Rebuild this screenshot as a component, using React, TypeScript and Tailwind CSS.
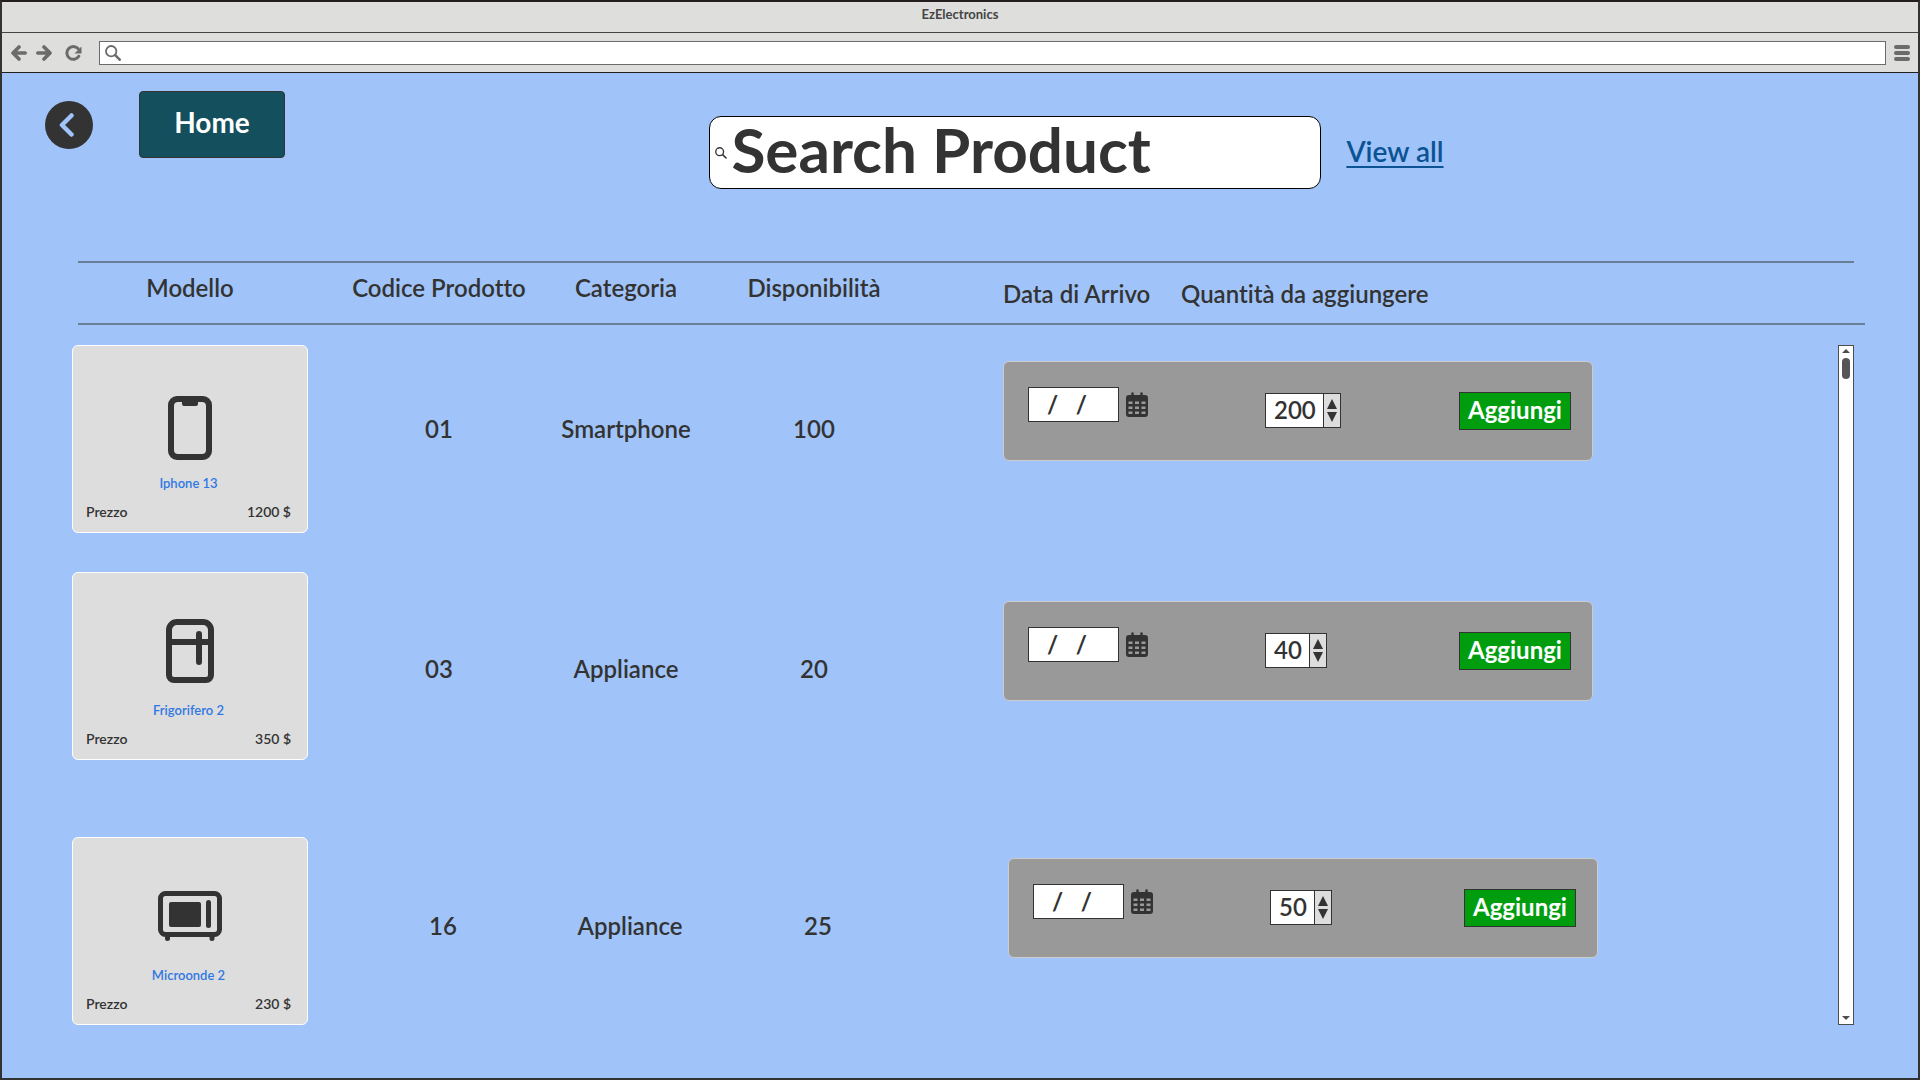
import type { ReactNode } from "react";

type Product = {
  name: string;
  price: string;
  code: string;
  category: string;
  available: string;
  quantity: string;
  icon: ReactNode;
  artClass: string;
  rowClass: string;
  cellClass: string;
  panelClass: string;
  quantityClass: string;
};

const PhoneIcon = () => (
  <svg width="44" height="64" viewBox="0 0 44 64" aria-hidden="true">
    <path
      fill="#333"
      fillRule="evenodd"
      d="M9 0h26a9 9 0 0 1 9 9v46a9 9 0 0 1-9 9H9a9 9 0 0 1-9-9V9a9 9 0 0 1 9-9zM14 6H10a4 4 0 0 0-4 4v44a4 4 0 0 0 4 4h24a4 4 0 0 0 4-4V10a4 4 0 0 0-4-4h-4v2a2 2 0 0 1-2 2H16a2 2 0 0 1-2-2z"
    />
  </svg>
);

const FridgeIcon = () => (
  <svg width="48" height="64" viewBox="0 0 48 64" fill="none" stroke="#333" strokeWidth="6" aria-hidden="true">
    <path d="M11 3h26a8 8 0 0 1 8 8v45a5 5 0 0 1-5 5H8a5 5 0 0 1-5-5V11a8 8 0 0 1 8-8zM3 23h42" />
    <path d="M33 15v28" strokeLinecap="round" />
  </svg>
);

const MicrowaveIcon = () => (
  <svg width="64" height="64" viewBox="0 0 64 64" aria-hidden="true">
    <rect x="2.5" y="9.5" width="59" height="41" rx="5" fill="none" stroke="#333" strokeWidth="5" />
    <rect x="11" y="18" width="32" height="25" rx="2" fill="#333" />
    <path d="M50.5 18.500v23" stroke="#333" strokeWidth="5" strokeLinecap="round" />
    <path d="M9.500 52v2.500M54 52v2.500" stroke="#333" strokeWidth="5" strokeLinecap="round" />
  </svg>
);

const CalendarIcon = () => (
  <svg width="22" height="25" viewBox="0 0 22 25" aria-hidden="true">
    <rect x="0" y="3" width="22" height="22" rx="3" fill="#333" />
    <path d="M6.500 1.500v4M15.500 1.500v4" stroke="#333" strokeWidth="2.500" strokeLinecap="round" />
    <path
      d="M2.500 9.500h4v2.500h-4zM9 9.500h4v2.500h-4zM15.500 9.500h4v2.500h-4zM2.500 14.500h4v2.500h-4zM9 14.500h4v2.500h-4zM15.500 14.500h4v2.500h-4zM2.500 19.500h4v2.500h-4zM9 19.500h4v2.500h-4zM15.500 19.500h4v2.500h-4z"
      fill="#999"
    />
  </svg>
);

const SearchGlyph = ({ size, color, stroke }: { size: number; color: string; stroke: number }) => (
  <svg width={size} height={size} viewBox="0 0 16 16" fill="none" stroke={color} strokeLinecap="round" aria-hidden="true">
    <circle cx="6.200" cy="6.200" r="5.200" strokeWidth="1.800" />
    <path d="M10.200 10.200l4.500 4.500" strokeWidth={stroke} />
  </svg>
);

const products: Product[] = [
  {
    name: "Iphone 13",
    price: "1200 $",
    code: "01",
    category: "Smartphone",
    available: "100",
    quantity: "200",
    icon: <PhoneIcon />,
    artClass: "pt-[50px]",
    rowClass: "h-[227px]",
    cellClass: "pt-[68px]",
    panelClass: "pt-4 pl-[91px]",
    quantityClass: "w-[57px]",
  },
  {
    name: "Frigorifero 2",
    price: "350 $",
    code: "03",
    category: "Appliance",
    available: "20",
    quantity: "40",
    icon: <FridgeIcon />,
    artClass: "pt-[46px]",
    rowClass: "h-[265px]",
    cellClass: "pt-[81px]",
    panelClass: "pt-[29px] pl-[91px]",
    quantityClass: "w-[43px]",
  },
  {
    name: "Microonde 2",
    price: "230 $",
    code: "16",
    category: "Appliance",
    available: "25",
    quantity: "50",
    icon: <MicrowaveIcon />,
    artClass: "pt-[46px]",
    rowClass: "h-[188px]",
    cellClass: "pt-[73px] pl-2",
    panelClass: "pt-[21px] pl-24",
    quantityClass: "w-[43px]",
  },
];

function BrowserBar() {
  return (
    <header className="bg-[#dededc]">
      <div className="h-[31px] border-b border-[#444] text-center text-[13px] leading-[25px] font-bold text-[#444]">
        EzElectronics
      </div>
      <div className="flex h-10 items-center border-b border-[#231f20] pr-2 pl-[9px]">
        <button aria-label="Indietro">
          <svg width="16" height="16" viewBox="0 0 16 16" fill="none" stroke="#6b6b6b" strokeWidth="3.600" strokeLinecap="round" strokeLinejoin="round">
            <path d="M8 2L2 8l6 6M2.500 8H14.200" />
          </svg>
        </button>
        <button aria-label="Avanti" className="ml-[9px]">
          <svg width="16" height="16" viewBox="0 0 16 16" fill="none" stroke="#6b6b6b" strokeWidth="3.600" strokeLinecap="round" strokeLinejoin="round">
            <path d="M8 2l6 6-6 6M13.500 8H1.800" />
          </svg>
        </button>
        <button aria-label="Ricarica" className="ml-[13px]">
          <svg width="17" height="16" viewBox="0 0 17 16" fill="none" stroke="#6b6b6b" strokeWidth="3">
            <path d="M13.800 11.200A6.400 6.400 0 1 1 13 3.600" strokeLinecap="round" />
            <path d="M16.500 1.500v7H9.500z" fill="#6b6b6b" stroke="none" />
          </svg>
        </button>
        <label className="mr-2 ml-[17px] flex h-6 flex-1 items-center border border-[#6b6b6b] bg-white pl-[5px]">
          <SearchGlyph size={16} color="#6b6b6b" stroke={2.6} />
          <input aria-label="Indirizzo" className="min-w-0 flex-1 px-2 text-sm outline-none" />
        </label>
        <button aria-label="Menu" className="flex flex-col gap-0.5">
          <span className="h-1 w-4 rounded-sm bg-[#6b6b6b]" />
          <span className="h-1 w-4 rounded-sm bg-[#6b6b6b]" />
          <span className="h-1 w-4 rounded-sm bg-[#6b6b6b]" />
        </button>
      </div>
    </header>
  );
}

function TopArea() {
  return (
    <nav className="flex h-[188px] items-start pt-[18px] pl-[43px]">
      <button aria-label="Torna indietro" className="mt-2.5 flex size-12 items-center justify-center rounded-full bg-[#333]">
        <svg width="16" height="26" viewBox="0 0 16 26" fill="none" stroke="#a0c4f9" strokeWidth="4.500" strokeLinecap="round" strokeLinejoin="round" className="mr-1">
          <path d="M12.500 3.500L3 13l9.500 9.500" />
        </svg>
      </button>
      <button className="ml-[46px] h-[67px] w-[146px] rounded border border-[#333] bg-[#144f5d] pb-1.5 text-[28px] leading-8 font-bold text-white">
        Home
      </button>
      <div className="flex-[424]" />
      <label className="mt-[25px] flex h-[73px] w-[612px] items-center rounded-xl border border-black bg-white pl-[5px]">
        <SearchGlyph size={12} color="#333333" stroke={2} />
        <input
          aria-label="Search Product"
          placeholder="Search Product"
          className="ml-1 h-[70px] min-w-0 flex-1 pb-2 text-[62px] leading-none font-bold outline-none placeholder:text-[#333] placeholder:opacity-100"
        />
      </label>
      <a
        href="#all"
        className="mt-11 ml-[25px] text-[28px] leading-8 font-semibold text-[#0b5394] underline decoration-2 underline-offset-4"
      >
        View all
      </a>
      <div className="flex-[474]" />
    </nav>
  );
}

function ProductCard({ product }: { product: Product }) {
  return (
    <article className="h-[188px] w-[236px] rounded-md border border-white bg-[#ddd] pr-4 pl-[13px]">
      <div className={`flex h-[125px] items-start justify-center pl-[3px] ${product.artClass}`}>{product.icon}</div>
      <p className="text-center text-[13px] leading-6 font-semibold text-[#2f78e4]">{product.name}</p>
      <div className="flex justify-between pt-[3px] text-sm leading-7 font-semibold">
        <span>Prezzo</span>
        <span>{product.price}</span>
      </div>
    </article>
  );
}

function AddPanel({ product }: { product: Product }) {
  return (
    <form
      onSubmit={(e) => e.preventDefault()}
      className="grid h-[100px] w-[590px] grid-cols-[237px_194px_112px] items-start rounded-md border border-[#ccc] bg-[#999] pt-[25px] pl-6"
    >
      <div className="flex items-center gap-[7px]">
        <input
          aria-label={`Data di arrivo ${product.name}`}
          defaultValue="/   /"
          className="h-[35px] w-[91px] border border-[#333] bg-white pl-[18px] text-2xl leading-8 font-bold outline-none"
        />
        <button type="button" aria-label="Apri calendario">
          <CalendarIcon />
        </button>
      </div>
      <div className="mt-1.5 flex h-[35px] w-fit border border-[#333] bg-white">
        <input
          aria-label={`Quantità ${product.name}`}
          inputMode="numeric"
          defaultValue={product.quantity}
          className={`pb-0.5 pl-2 text-2xl leading-8 font-semibold outline-none ${product.quantityClass}`}
        />
        <div className="flex w-[17px] flex-col items-center justify-center gap-[3px] border-l border-[#333] bg-[#ddd]">
          <button type="button" aria-label="Aumenta">
            <svg width="10" height="10" viewBox="0 0 10 10" fill="#333">
              <path d="M5 0l5 10H0z" />
            </svg>
          </button>
          <button type="button" aria-label="Diminuisci">
            <svg width="10" height="10" viewBox="0 0 10 10" fill="#333">
              <path d="M5 10L0 0h10z" />
            </svg>
          </button>
        </div>
      </div>
      <button className="mt-[5px] h-[38px] w-28 border border-[#333] bg-[#009e0f] pb-0.5 text-2xl leading-8 font-bold text-white">
        Aggiungi
      </button>
    </form>
  );
}

function ProductTable() {
  return (
    <table className="block flex-1 leading-[30px]">
      <thead className="-mr-[27px] ml-1.5 block border-b-2 border-[#6a7e98]">
        <tr className="grid h-[60px] grid-cols-[264fr_194fr_180fr_196fr_269fr_684fr] pt-[9px] text-2xl">
          <th scope="col" className="pr-10 font-semibold">Modello</th>
          <th scope="col" className="font-semibold">Codice Prodotto</th>
          <th scope="col" className="font-semibold">Categoria</th>
          <th scope="col" className="font-semibold">Disponibilità</th>
          <th scope="col" className="pt-1.5 pl-[91px] text-left font-semibold">Data di Arrivo</th>
          <th scope="col" className="pt-1.5 text-left font-semibold">Quantità da aggiungere</th>
        </tr>
      </thead>
      <tbody className="block pt-5">
        {products.map((product) => (
          <tr
            key={product.name}
            className={`grid grid-cols-[270fr_194fr_180fr_196fr_926fr] text-center text-2xl font-semibold ${product.rowClass}`}
          >
            <td>
              <ProductCard product={product} />
            </td>
            <td className={product.cellClass}>{product.code}</td>
            <td className={product.cellClass}>{product.category}</td>
            <td className={product.cellClass}>{product.available}</td>
            <td colSpan={2} className={`text-left ${product.panelClass}`}>
              <AddPanel product={product} />
            </td>
          </tr>
        ))}
      </tbody>
    </table>
  );
}

function ScrollTrack() {
  return (
    <div className="mt-[82px] flex w-4 flex-col items-center border border-[#4d4d4d] bg-white pt-[3px] pb-1">
      <button aria-label="Scorri su">
        <svg width="8" height="4" viewBox="0 0 8 4" fill="#4d4d4d" className="block">
          <path d="M4 0l4 4H0z" />
        </svg>
      </button>
      <div className="mt-[5px] h-[21px] w-2 rounded-full bg-[#555]" />
      <div className="flex-1" />
      <button aria-label="Scorri giù">
        <svg width="8" height="4" viewBox="0 0 8 4" fill="#4d4d4d" className="block">
          <path d="M4 4L0 0h8z" />
        </svg>
      </button>
    </div>
  );
}

export default function App() {
  return (
    <div className="flex min-h-screen flex-col border-2 border-[#333] border-t-[#231f20] bg-[#a0c4f9] font-['Lato',sans-serif] text-[#333] [font-variant-ligatures:none]">
      <BrowserBar />
      <TopArea />
      <main className="pr-16 pl-[70px]">
        <hr className="ml-1.5 border-t-2 border-[#6a7e98]" />
        <div className="flex">
          <ProductTable />
          <ScrollTrack />
        </div>
      </main>
    </div>
  );
}
